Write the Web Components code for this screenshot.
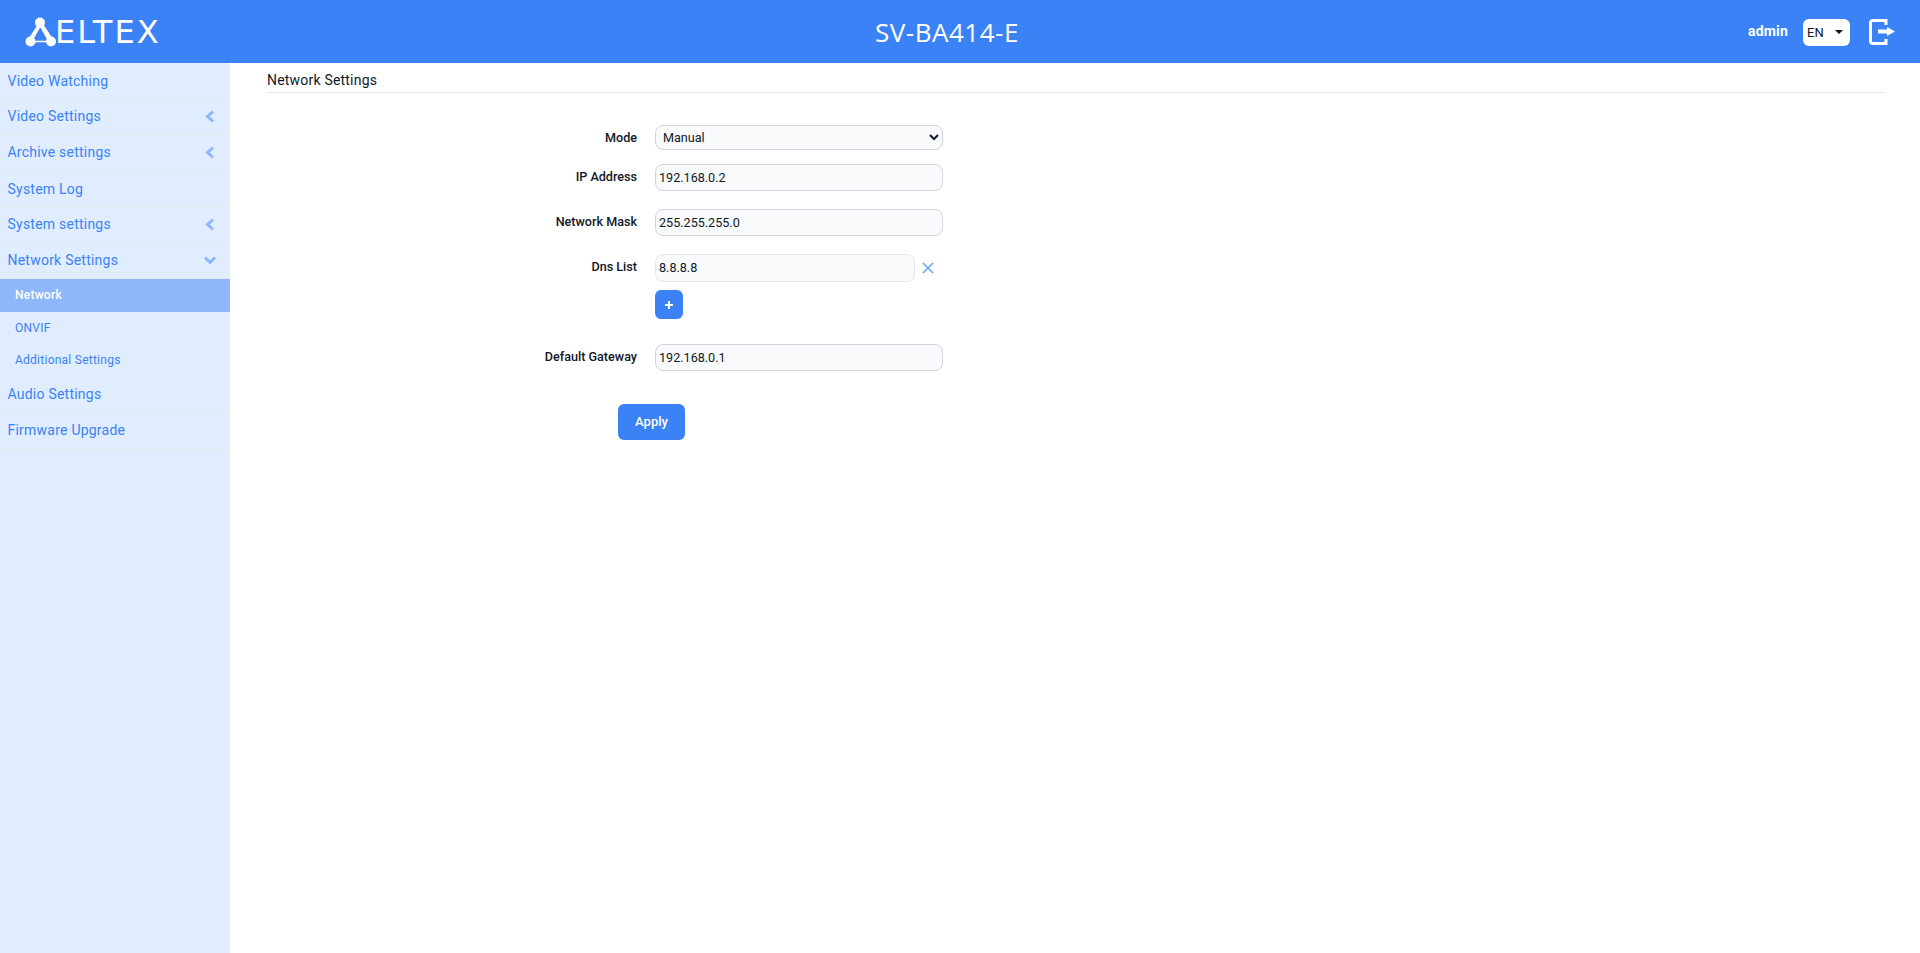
<!DOCTYPE html>
<html lang="en">
<head>
<meta charset="utf-8">
<title>SV-BA414-E</title>
<style>
  html, body { margin: 0; height: 100%; }
  body { font-family: Roboto, "Liberation Sans", sans-serif; background: #fff; }
  app-shell { height: 953px; }
</style>
</head>
<body>
<app-shell>
  <top-bar slot="top" device="SV-BA414-E" user="admin"></top-bar>
  <side-nav slot="side">
    <nav-item label="Video Watching"></nav-item>
    <nav-item label="Video Settings" arrow="left"></nav-item>
    <nav-item label="Archive settings" arrow="left"></nav-item>
    <nav-item label="System Log"></nav-item>
    <nav-item label="System settings" arrow="left"></nav-item>
    <nav-item label="Network Settings" arrow="down"></nav-item>
    <nav-sub label="Network" active></nav-sub>
    <nav-sub label="ONVIF"></nav-sub>
    <nav-sub label="Additional Settings"></nav-sub>
    <nav-item label="Audio Settings"></nav-item>
    <nav-item label="Firmware Upgrade"></nav-item>
  </side-nav>
  <settings-page heading="Network Settings">
    <form-row label="Mode" gap="14">
      <select-field value="Manual"></select-field>
    </form-row>
    <form-row label="IP Address" gap="18">
      <text-field value="192.168.0.2"></text-field>
    </form-row>
    <form-row label="Network Mask" gap="18">
      <text-field value="255.255.255.0"></text-field>
    </form-row>
    <form-row label="Dns List" gap="25">
      <dns-list value="8.8.8.8"></dns-list>
    </form-row>
    <form-row label="Default Gateway" gap="33">
      <text-field value="192.168.0.1"></text-field>
    </form-row>
    <apply-button>Apply</apply-button>
  </settings-page>
</app-shell>

<script>
// page frame: bar on top, menu on the left, content fills the rest
class AppShell extends HTMLElement {
  connectedCallback() {
    this.attachShadow({ mode: 'open' });
    this.shadowRoot.innerHTML = `
      <style>
        :host { display: grid; grid-template-columns: 230px 1fr; grid-template-rows: 63px 1fr; }
        .top { grid-column: 1 / 3; }
      </style>
      <div class="top"><slot name="top"></slot></div>
      <slot name="side"></slot>
      <slot></slot>
    `;
  }
}

class TopBar extends HTMLElement {
  connectedCallback() {
    this.attachShadow({ mode: 'open' });
    this.shadowRoot.innerHTML = `
      <style>
        :host {
          display: flex;
          justify-content: space-between;
          align-items: center;
          height: 63px;
          background: #3b82f6;
          color: #fff;
        }
        .logo { display: flex; align-items: center; width: 160px; box-sizing: border-box; padding-left: 25px; }
        .logo span {
          font: 400 32px/1 "DejaVu Sans", sans-serif;
          letter-spacing: 2.100px;
        }
        h1 { margin: 0; font: 400 26px/1 "Open Sans", sans-serif; letter-spacing: .5px; }
        .right { display: flex; justify-content: flex-end; align-items: center; width: 186px; padding-right: 25px; box-sizing: border-box; }
        .user { font: 700 14px/1 Roboto, sans-serif; letter-spacing: .2px; margin-right: 15px; margin-top: -1px; }
        .lang {
          box-sizing: border-box;
          display: flex; align-items: center; justify-content: space-between;
          flex: none;
          width: 47px; height: 27px;
          padding: 0 7px 0 4px;
          background: #fff;
          border-radius: 6px;
          color: #111827;
          font: 400 13px/1 Roboto, sans-serif;
          margin-right: 19px;
          margin-top: 1px;
        }
        .lang i { border: 4px solid transparent; border-top-color: #111; border-bottom: 0; }
        svg { display: block; flex: none; }
      </style>
      <div class="logo">
        <svg width="30" height="30" viewBox="0 0 30 30" style="overflow:visible">
          <path d="M15 5.500 L5.500 24.500 L26 24.500 Z" fill="none" stroke="#fff" stroke-width="1.500"/>
          <path d="M13 7 L4 21 L7.500 24 L16 9 Z M14 8 L24 26 L28 22 L18 7 Z" fill="#fff"/>
          <circle cx="15" cy="5.500" r="5" fill="#fff"/>
          <circle cx="5.500" cy="24.500" r="5" fill="#fff"/>
          <circle cx="26" cy="24.500" r="5" fill="#fff"/>
        </svg>
        <span>ELTEX</span>
      </div>
      <h1>${this.getAttribute('device')}</h1>
      <div class="right">
        <span class="user">${this.getAttribute('user')}</span>
        <div class="lang"><span>EN</span><i></i></div>
        <svg width="26" height="26" viewBox="0 0 26 26">
          <path d="M17 6 V1.500 H4 Q1.500 1.500 1.500 4 V22 Q1.500 24.500 4 24.500 H17 V20" fill="none" stroke="#fff" stroke-width="3"/>
          <path d="M9 10.500 H18 V8 L26 12.500 L18 17 V14.500 H9 Z" fill="#fff"/>
        </svg>
      </div>
    `;
  }
}

class SideNav extends HTMLElement {
  connectedCallback() {
    this.attachShadow({ mode: 'open' });
    this.shadowRoot.innerHTML = `
      <style>
        :host { display: block; background: #e0edff; min-height: 890px; }
      </style>
      <slot></slot>
    `;
  }
}

const ARROWS = {
  left: '<path d="M9 2.500 L3.500 7.500 L9 12.500" />',
  down: '<path d="M1 4.500 L6 9.500 L11 4.500" />'
};

class NavItem extends HTMLElement {
  connectedCallback() {
    const arrow = this.getAttribute('arrow');
    this.attachShadow({ mode: 'open' });
    this.shadowRoot.innerHTML = `
      <style>
        :host {
          display: flex;
          align-items: center;
          justify-content: space-between;
          box-sizing: border-box;
          height: 36px;
          padding: 0 12px ${arrow ? 1 : 0}px 7.500px;
          border-bottom: 1px solid #e5e7eb;
          color: #3b82f6;
          font: 400 14px/1 Roboto, sans-serif;
          letter-spacing: .23px;
        }
        svg { fill: none; stroke: #8db6fb; stroke-width: 3; }
      </style>
      <span>${this.getAttribute('label')}</span>
      ${arrow ? `<svg width="14" height="15" viewBox="0 0 14 15">${ARROWS[arrow]}</svg>` : ''}
    `;
  }
}

class NavSub extends HTMLElement {
  connectedCallback() {
    this.attachShadow({ mode: 'open' });
    this.shadowRoot.innerHTML = `
      <style>
        :host {
          display: flex;
          align-items: center;
          height: 32.500px;
          padding-left: 15px;
          color: #3b82f6;
          font: 400 12px/1 Roboto, sans-serif;
          letter-spacing: .25px;
        }
        :host([active]) { background: #8db6fb; color: #fff; font-weight: 500; }
      </style>
      <span>${this.getAttribute('label')}</span>
    `;
  }
}

class SettingsPage extends HTMLElement {
  connectedCallback() {
    this.attachShadow({ mode: 'open' });
    this.shadowRoot.innerHTML = `
      <style>
        :host { display: block; padding: 0 35px 0 37px; }
        h2 {
          margin: 0 0 32px;
          height: 30px;
          box-sizing: border-box;
          padding: 9px 0 0 0;
          border-bottom: 1px solid #e5e7eb;
          font: 400 14px/1.200 Roboto, sans-serif;
          letter-spacing: .2px;
          color: #111827;
        }
      </style>
      <h2>${this.getAttribute('heading')}</h2>
      <slot></slot>
    `;
  }
}

class FormRow extends HTMLElement {
  connectedCallback() {
    this.attachShadow({ mode: 'open' });
    this.shadowRoot.innerHTML = `
      <style>
        :host {
          display: grid;
          grid-template-columns: 370px 288px;
          column-gap: 18px;
          margin-bottom: ${this.getAttribute('gap') || 18}px;
        }
        label {
          text-align: right;
          font: 500 12.600px/15px Roboto, sans-serif;
          color: #111827;
          padding-top: 5px;
        }
      </style>
      <label>${this.getAttribute('label')}</label>
      <slot></slot>
    `;
  }
}

const FIELD_CSS = `
  box-sizing: border-box;
  border: 1px solid #d1d5db;
  background: #f9fafb;
  color: #111827;
  border-radius: 8px;
  font: 400 12.600px Roboto, sans-serif;
  outline: none;
`;

class TextField extends HTMLElement {
  connectedCallback() {
    this.attachShadow({ mode: 'open' });
    this.shadowRoot.innerHTML = `
      <style>
        :host { display: block; }
        input { ${FIELD_CSS} display: block; width: 100%; height: 27px; padding: 0 3px 1px; }
      </style>
      <input type="text" value="${this.getAttribute('value')}">
    `;
  }
}

class SelectField extends HTMLElement {
  connectedCallback() {
    this.attachShadow({ mode: 'open' });
    this.shadowRoot.innerHTML = `
      <style>
        :host { display: block; }
        select { ${FIELD_CSS} display: block; width: 100%; height: 25px; padding: 0 3px; }
      </style>
      <select><option>${this.getAttribute('value')}</option></select>
    `;
  }
}

class DnsList extends HTMLElement {
  connectedCallback() {
    this.attachShadow({ mode: 'open' });
    this.shadowRoot.innerHTML = `
      <style>
        :host { display: block; }
        .entry { display: flex; align-items: center; gap: 6px; margin-bottom: 8px; }
        input { ${FIELD_CSS} border-color: #e5e7eb; display: block; width: 260px; height: 28px; padding: 0 3px 1px; }
        svg { display: block; }
        button {
          display: flex; align-items: center; justify-content: center;
          width: 28px; height: 29px; padding: 0;
          border: 0; border-radius: 6px;
          background: #3b82f6; color: #fff;
        }
      </style>
      <div class="entry">
        <input type="text" value="${this.getAttribute('value')}">
        <svg width="14" height="14" viewBox="0 0 14 14"><path d="M2 2 L12 12 M12 2 L2 12" stroke="#60a5fa" stroke-width="1.500"/></svg>
      </div>
      <button type="button" aria-label="Add">
        <svg width="10" height="10" viewBox="0 0 10 10"><path d="M5 1 V9 M1 5 H9" stroke="#fff" stroke-width="2"/></svg>
      </button>
    `;
  }
}

class ApplyButton extends HTMLElement {
  connectedCallback() {
    this.attachShadow({ mode: 'open' });
    this.shadowRoot.innerHTML = `
      <style>
        :host { display: block; padding-left: 351px; }
        button {
          width: 67px; height: 36px; padding: 0 0 1px;
          border: 0; border-radius: 6px;
          background: #3b82f6; color: #fff;
          font: 500 13px Roboto, sans-serif;
        }
      </style>
      <button type="button"><slot></slot></button>
    `;
  }
}

customElements.define('app-shell', AppShell);
customElements.define('top-bar', TopBar);
customElements.define('side-nav', SideNav);
customElements.define('nav-item', NavItem);
customElements.define('nav-sub', NavSub);
customElements.define('settings-page', SettingsPage);
customElements.define('form-row', FormRow);
customElements.define('text-field', TextField);
customElements.define('select-field', SelectField);
customElements.define('dns-list', DnsList);
customElements.define('apply-button', ApplyButton);
</script>
</body>
</html>
